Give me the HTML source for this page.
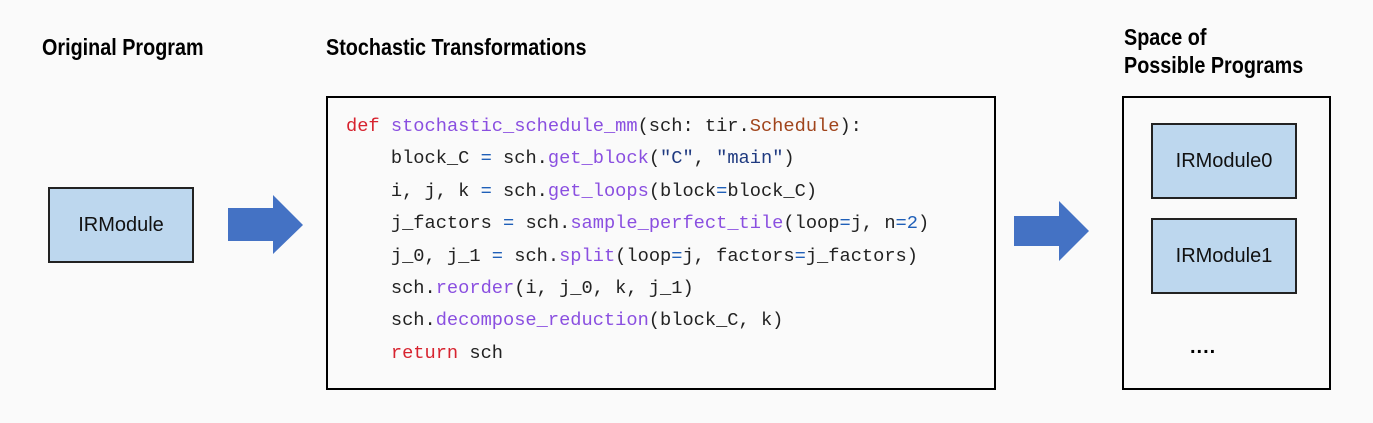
<!DOCTYPE html>
<html><head><style>
html,body{margin:0;padding:0;background:#fafafa;width:1373px;height:423px;overflow:hidden;position:relative;font-family:"Liberation Sans",sans-serif}
.t{position:absolute;font-family:"Liberation Sans",sans-serif;font-weight:bold;font-size:23px;color:#000;line-height:28px;white-space:nowrap;transform:scaleX(0.86);transform-origin:0 50%}
.box{position:absolute;border:2px solid #000;box-sizing:border-box}
.ir{position:absolute;background:#bdd7ee;border:2px solid #222;box-sizing:border-box;display:flex;align-items:center;justify-content:center;font-size:20px;color:#111}
.code{position:absolute;left:346px;top:110px;font-family:"Liberation Mono",monospace;font-size:18.7px;line-height:32.4px;color:#222;white-space:pre;}
.k{color:#d7232f}.f{color:#8a4fe0}.c{color:#a0441b}.o{color:#1f5fb8}.s{color:#1f3a80}
</style></head><body>
<div class="t" style="left:42px;top:33px">Original Program</div>
<div class="t" style="left:326px;top:33px">Stochastic Transformations</div>
<div class="t" style="left:1124px;top:23px">Space of</div>
<div class="t" style="left:1124px;top:51px">Possible Programs</div>

<div class="ir" style="left:48px;top:187px;width:146px;height:76px">IRModule</div>

<svg style="position:absolute;left:0;top:0" width="1373" height="423">
<polygon points="228,208 273,208 273,195 303,225 273,254 273,241 228,241" fill="#4472c4"/>
<polygon points="1014,216 1059,216 1059,201 1089,231 1059,261 1059,246 1014,246" fill="#4472c4"/>
</svg>

<div class="box" style="left:326px;top:96px;width:670px;height:294px;background:#fafafa"></div>
<div class="code"><span class="k">def</span> <span class="f">stochastic_schedule_mm</span>(sch: tir.<span class="c">Schedule</span>):
    block_C <span class="o">=</span> sch.<span class="f">get_block</span>(<span class="s">"C"</span>, <span class="s">"main"</span>)
    i, j, k <span class="o">=</span> sch.<span class="f">get_loops</span>(block<span class="o">=</span>block_C)
    j_factors <span class="o">=</span> sch.<span class="f">sample_perfect_tile</span>(loop<span class="o">=</span>j, n<span class="o">=2</span>)
    j_0, j_1 <span class="o">=</span> sch.<span class="f">split</span>(loop<span class="o">=</span>j, factors<span class="o">=</span>j_factors)
    sch.<span class="f">reorder</span>(i, j_0, k, j_1)
    sch.<span class="f">decompose_reduction</span>(block_C, k)
    <span class="k">return</span> sch</div>

<div class="box" style="left:1122px;top:96px;width:209px;height:294px"></div>
<div class="ir" style="left:1151px;top:123px;width:146px;height:76px">IRModule0</div>
<div class="ir" style="left:1151px;top:218px;width:146px;height:76px">IRModule1</div>
<div style="position:absolute;left:1190px;top:336px;font-size:20px;font-weight:bold;letter-spacing:1px">....</div>
</body></html>
